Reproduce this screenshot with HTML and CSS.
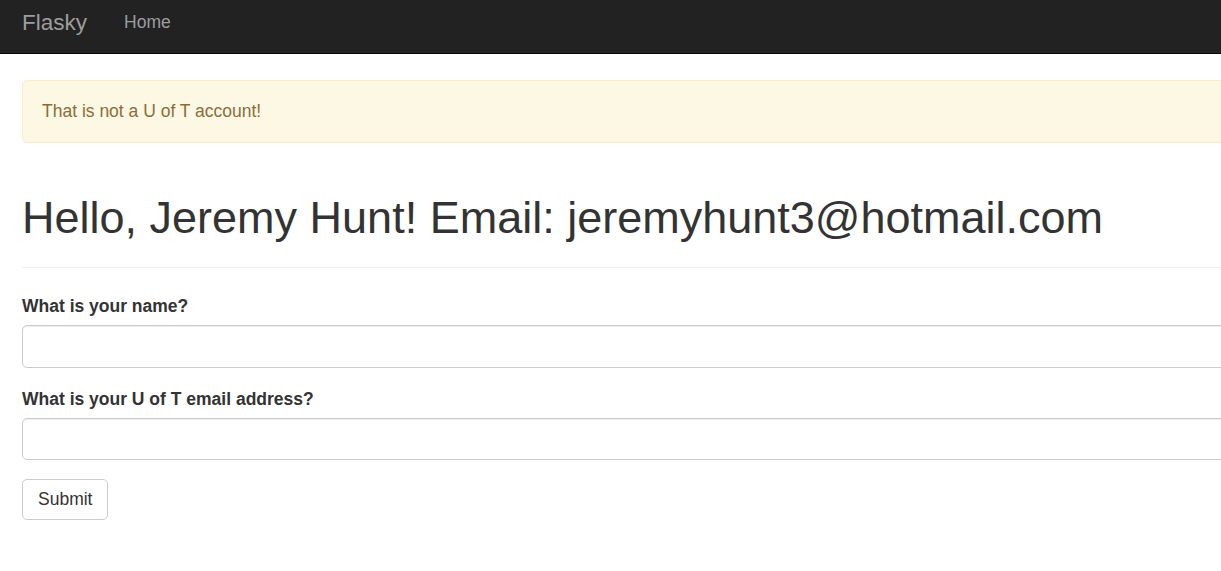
FILE: index.html
```html
<!DOCTYPE html>
<html lang="en">
<head>
<meta charset="utf-8">
<title>Flasky</title>
<link rel="stylesheet" href="styles.css">
</head>
<body>
<nav class="navbar">
  <a class="brand" href="#">Flasky</a>
  <ul class="nav">
    <li><a href="#">Home</a></li>
  </ul>
</nav>
<main class="container">
  <div class="alert">That is not a U of T account!</div>
  <div class="page-header">
    <h1>Hello, Jeremy Hunt! Email: jeremyhunt3@hotmail.com</h1>
  </div>
  <form class="form">
    <div class="form-group">
      <label for="name">What is your name?</label>
      <input id="name" class="form-control" type="text">
    </div>
    <div class="form-group">
      <label for="email">What is your U of T email address?</label>
      <input id="email" class="form-control" type="text">
    </div>
    <button class="btn" type="submit">Submit</button>
  </form>
</main>
</body>
</html>
```
FILE: styles.css
```css
html, body {
  margin: 0;
  padding: 0;
  overflow-x: hidden;
}
body {
  font-family: "Liberation Sans", Arial, sans-serif;
  font-size: 17.5px;
  line-height: 25px;
  color: #333;
  background: #fff;
}
.navbar {
  display: flex;
  align-items: flex-start;
  height: 43px;
  padding: 10px 0 0 22px;
  background: #222;
  border-bottom: 1px solid #080808;
}
.brand {
  font-size: 22.5px;
  line-height: 25px;
  color: #9d9d9d;
  text-decoration: none;
  padding-right: 19px;
}
.nav {
  display: flex;
  list-style: none;
  margin: 0;
  padding: 0;
}
.nav a {
  display: block;
  padding-left: 18px;
  line-height: 25px;
  color: #9d9d9d;
  text-decoration: none;
}
.container {
  padding: 26px 0 0 22px;
  margin-right: -60px;
}
.alert {
  padding: 18px 19px;
  line-height: 25px;
  background: #fcf8e3;
  border: 1px solid #faebcc;
  border-radius: 5px;
  color: #8a6d3b;
}
.page-header {
  margin: 50px 0 26px;
  padding-bottom: 12px;
  border-bottom: 1px solid #eee;
}
.page-header h1 {
  margin: 0 0 12.5px;
  font-size: 45px;
  line-height: 49.5px;
  font-weight: 500;
}
.form-group {
  margin-bottom: 18.75px;
}
.form-group label {
  display: block;
  font-weight: bold;
  margin-bottom: 6.25px;
}
.form-control {
  display: block;
  box-sizing: border-box;
  width: 100%;
  height: 42.5px;
  margin: 0;
  padding: 7.5px 15px;
  font: inherit;
  color: #555;
  background: #fff;
  border: 1px solid #ccc;
  border-radius: 5px;
  box-shadow: inset 0 1px 1px rgba(0,0,0,.075);
}
.btn {
  display: inline-block;
  margin: 0;
  padding: 7px 15px;
  font: inherit;
  line-height: 25px;
  color: #333;
  background: #fff;
  border: 1px solid #ccc;
  border-radius: 5px;
}
```
